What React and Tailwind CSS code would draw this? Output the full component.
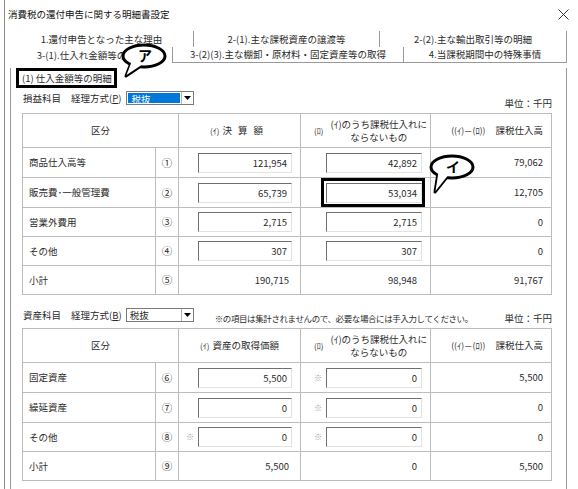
import React from 'react';

const line = 'border-[#bcbcbc]';

function Field({ value, mark, wide }) {
  return (
    <div className="flex items-center justify-end h-full pr-[8px]">
      {mark && <span className="mr-[4px] text-[8px] text-[#9a9a9a]">※</span>}
      <div
        className={`${wide ? 'w-[96px]' : 'w-[94px]'} h-[20px] bg-white border border-t-[#6f6f6f] border-l-[#6f6f6f] border-r-[#e2e2e2] border-b-[#e2e2e2] text-right pr-[4px] leading-[18px] text-[9.5px]`}
      >
        {value}
      </div>
    </div>
  );
}

function Cell({ children, className = '' }) {
  return <div className={`border-r border-b ${line} flex items-center ${className}`}>{children}</div>;
}

function DataTable({ head1, rows, sub, heights }) {
  return (
    <div className={`ml-[11px] w-[530px] grid grid-cols-[133px_23px_122px_130px_121px] border-l border-t ${line}`}>
      <Cell className="col-span-2 h-[34px] justify-center">区分</Cell>
      <Cell className="h-[34px] justify-center">
        <span className="text-[8px] mr-[3px]">(ｲ)</span>
        {head1}
      </Cell>
      <Cell className="h-[34px] pl-[13px]">
        <span className="text-[8px] mr-[7px]">(ﾛ)</span>
        <span className="text-center leading-[13px]">
          (ｲ)のうち課税仕入れに
          <br />
          ならないもの
        </span>
      </Cell>
      <Cell className="h-[34px] justify-end pr-[8px]">
        <span className="text-[8.5px] mr-[10px]">((ｲ)－(ﾛ))</span>
        課税仕入高
      </Cell>
      {rows.map((r, i) => (
        <React.Fragment key={r.label}>
          <Cell className={`${heights[i]} pl-[6px]`}>{r.label}</Cell>
          <Cell className={`${heights[i]} justify-center text-[10.5px]`}>{r.no}</Cell>
          <Cell className={`${heights[i]} justify-end`}>
            <Field value={r.a} mark={r.markA} />
          </Cell>
          <Cell className={`${heights[i]} justify-end`}>
            <Field value={r.b} mark={r.markB} wide />
          </Cell>
          <Cell className={`${heights[i]} justify-end pr-[8px]`}>{r.c}</Cell>
        </React.Fragment>
      ))}
      <Cell className="h-[29px] pl-[6px]">小計</Cell>
      <Cell className="h-[29px] justify-center text-[10.5px]">{sub.no}</Cell>
      <Cell className="h-[29px] justify-end pr-[11px]">{sub.a}</Cell>
      <Cell className="h-[29px] justify-end pr-[13px]">{sub.b}</Cell>
      <Cell className="h-[29px] justify-end pr-[8px]">{sub.c}</Cell>
    </div>
  );
}

function Combo({ selected, label }) {
  return (
    <div className="flex w-[68px] h-[14px] border border-[#7a7a7a] bg-white">
      <div className={`flex-1 pl-[3px] leading-[12px] ${selected ? 'bg-[#0078d7] text-white m-[1px] leading-[10px]' : ''}`}>
        {label}
      </div>
      <div className="w-[12px] flex items-center justify-center border-l border-[#b5b5b5] bg-white">
        <svg width="7" height="4" viewBox="0 0 7 4">
          <path d="M0 0h7L3.5 4z" fill="#000" />
        </svg>
      </div>
    </div>
  );
}

function Bubble({ x, y, tail, text }) {
  // ellipse centre x,y ; tail = [base1, tip, base2]
  const pts = tail.map((p) => p.join(',')).join(' ');
  return (
    <>
      <svg className="absolute left-0 top-0 pointer-events-none" width="578" height="489">
        <polygon points={pts} fill="#000" stroke="#000" strokeWidth="3" strokeLinejoin="round" />
        <ellipse cx={x} cy={y} rx="21" ry="11" fill="#fff" stroke="#000" strokeWidth="3" />
        <polygon points={pts} fill="#fff" transform={`translate(0.5 -1)`} />
      </svg>
      <span
        className="absolute text-[14px] font-bold leading-none text-black"
        style={{ left: x - 6, top: y - 8 }}
      >
        {text}
      </span>
    </>
  );
}

export default function App() {
  const rows1 = [
    { label: '商品仕入高等', no: '①', a: '121,954', b: '42,892', c: '79,062' },
    { label: '販売費･一般管理費', no: '②', a: '65,739', b: '53,034', c: '12,705' },
    { label: '営業外費用', no: '③', a: '2,715', b: '2,715', c: '0' },
    { label: 'その他', no: '④', a: '307', b: '307', c: '0' },
  ];
  const rows2 = [
    { label: '固定資産', no: '⑥', a: '5,500', b: '0', markB: true, c: '5,500' },
    { label: '繰延資産', no: '⑦', a: '0', b: '0', markB: true, c: '0' },
    { label: 'その他', no: '⑧', a: '0', markA: true, b: '0', markB: true, c: '0' },
  ];

  return (
    <div className="relative w-[578px] h-[489px] overflow-hidden bg-white text-[#2b2b2b] text-[9.5px] font-['Noto_Sans_CJK_JP','Noto_Sans',sans-serif]">
      <div className="ml-[4px] h-full border-l border-[#8c8c8c]">
        {/* title bar */}
        <div className="flex items-center justify-between h-[28px] pl-[3px] pr-[9px]">
          <span className="text-[9.5px] text-[#111]">消費税の還付申告に関する明細書設定</span>
          <svg width="11" height="11" viewBox="0 0 11 11">
            <path d="M0.5 0.5l10 10M10.5 0.5l-10 10" stroke="#333" strokeWidth="1" />
          </svg>
        </div>

        {/* tabs */}
        <div className="ml-[5px] w-[557px] mt-[3px]">
          <div className="flex h-[16px]">
            <div className="w-[184px] border-r border-[#9a9a9a] flex items-center justify-center">1.還付申告となった主な理由</div>
            <div className="w-[186px] border-r border-[#9a9a9a] flex items-center justify-center">2-(1).主な課税資産の譲渡等</div>
            <div className="w-[187px] border-r border-[#9a9a9a] flex items-center justify-center">2-(2).主な輸出取引等の明細</div>
          </div>
          <div className="flex h-[16px]">
            <div className="w-[163px] border-r border-[#9a9a9a] flex items-center justify-center">3-(1).仕入れ金額等の明細</div>
            <div className="w-[231px] border-r border-b border-[#9a9a9a] flex items-center justify-center">3-(2)(3).主な棚卸・原材料・固定資産等の取得</div>
            <div className="w-[163px] border-r border-b border-[#9a9a9a] flex items-center justify-center">4.当課税期間中の特殊事情</div>
          </div>

          {/* panel */}
          <div className="h-[423px] border-l border-r border-b border-[#9a9a9a]">
            <div className="ml-[5px] mt-[5px] w-[101px] h-[20px] border-[3px] border-black flex items-center pl-[3px] text-[9.5px]">
              (1) 仕入金額等の明細
            </div>

            <div className="flex justify-between h-[25px] pr-[14px]">
              <div className="flex items-start pt-[3px] pl-[12px]">
                <span className="leading-[14px]">損益科目</span>
                <span className="ml-[10px] leading-[14px]">
                  経理方式(<span className="underline">P</span>)
                </span>
                <div className="ml-[5px]">
                  <Combo selected label="税抜" />
                </div>
              </div>
              <div className="self-end pb-[3px]">単位：千円</div>
            </div>

            <DataTable
              head1={<span className="tracking-[6px]">決算額</span>}
              rows={rows1}
              heights={['h-[30px]', 'h-[30px]', 'h-[29px]', 'h-[29px]']}
              sub={{ no: '⑤', a: '190,715', b: '98,948', c: '91,767' }}
            />

            <div className="flex items-start h-[33px] pt-[13px] pl-[12px] pr-[14px]">
              <span className="leading-[14px]">資産科目</span>
              <span className="ml-[10px] leading-[14px]">
                経理方式(<span className="underline">B</span>)
              </span>
              <div className="ml-[4px]">
                <Combo label="税抜" />
              </div>
              <span className="ml-[21px] mt-[4px] text-[8.5px] leading-[12px] tracking-[-0.4px]">
                ※の項目は集計されませんので、必要な場合には手入力してください。
              </span>
              <span className="ml-auto mt-[4px] leading-[12px]">単位：千円</span>
            </div>

            <DataTable
              head1="資産の取得価額"
              rows={rows2}
              heights={['h-[30px]', 'h-[30px]', 'h-[29px]']}
              sub={{ no: '⑨', a: '5,500', b: '0', c: '5,500' }}
            />
          </div>
        </div>
      </div>

      {/* annotations */}
      <Bubble x={144} y={56} tail={[[131, 63], [126, 76], [141, 66]]} text="ア" />
      <Bubble x={452} y={167} tail={[[438, 173], [435, 192], [447, 177]]} text="イ" />
      <div className="absolute left-[321px] top-[178px] w-[104px] h-[29px] border-[3px] border-black" />
    </div>
  );
}
